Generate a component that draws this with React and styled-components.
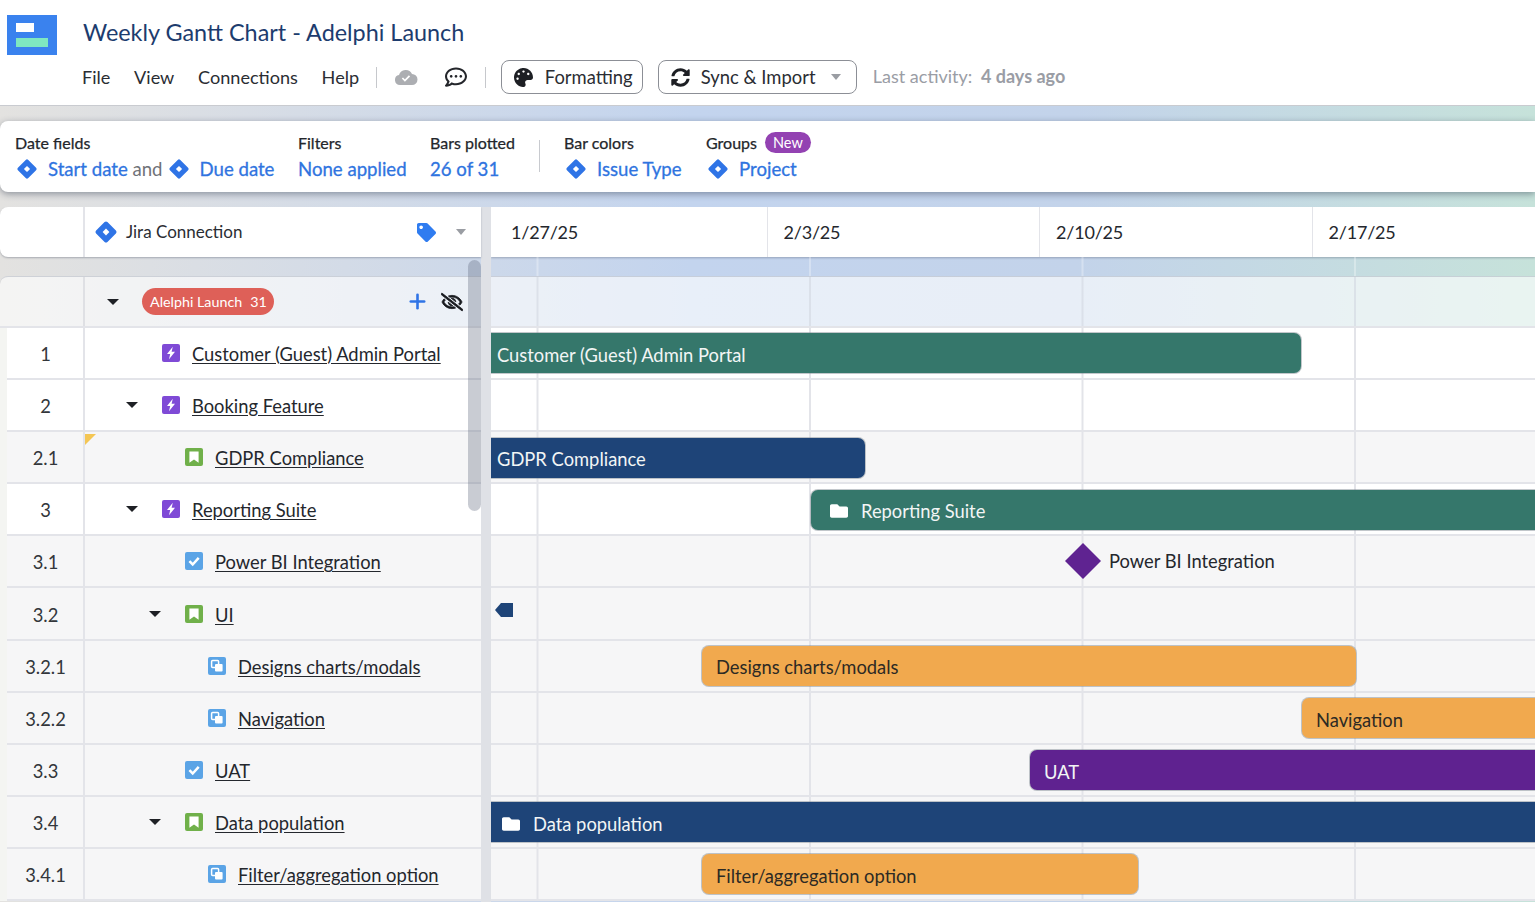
import React from 'react';
import styled, { createGlobalStyle } from 'styled-components';
import { FaPalette, FaSyncAlt, FaTag, FaRegCommentDots, FaRegEyeSlash, FaFolder } from 'react-icons/fa';
import { Plus } from 'lucide-react';

const GlobalStyle = createGlobalStyle`
  html, body {
    margin: 0;
    height: 100%;
    overflow: hidden;
    background: #fff;
    font-family: Lato, "Open Sans", sans-serif;
    color: #22252c;
  }
  * { box-sizing: border-box; }
`;

const JiraIcon = ({ size = 22 }) => (
  <svg width={size} height={size} viewBox="0 0 24 24">
    <rect x="4" y="4" width="16" height="16" rx="2" fill="#2f74e6" transform="rotate(45 12 12)" />
    <rect x="9.6" y="9.6" width="4.8" height="4.8" fill="#fff" transform="rotate(45 12 12)" />
  </svg>
);

const BoltIcon = () => (
  <svg width="18" height="18" viewBox="0 0 18 18">
    <rect width="18" height="18" rx="2" fill="#7f4ad6" />
    <path d="M10.8 2.8 5 10h3.2l-1.2 5.2L13 7.8H9.6z" fill="#fff" />
  </svg>
);

const StoryIcon = () => (
  <svg width="18" height="18" viewBox="0 0 18 18">
    <rect width="18" height="18" rx="2" fill="#70b04a" />
    <path d="M4.4 3.4h9.2v11.4L9 11.6l-4.6 3.2z" fill="#fff" />
  </svg>
);

const TaskIcon = () => (
  <svg width="18" height="18" viewBox="0 0 18 18">
    <rect width="18" height="18" rx="2" fill="#5ba4e6" />
    <path d="m4.4 9.2 3.3 3.3 6-6.6" fill="none" stroke="#fff" strokeWidth="2.5" />
  </svg>
);

const SubtaskIcon = () => (
  <svg width="18" height="18" viewBox="0 0 18 18">
    <rect width="18" height="18" rx="2" fill="#5ba4e6" />
    <rect x="3.6" y="3.4" width="7" height="7" rx="1" fill="none" stroke="#fff" strokeWidth="1.5" />
    <rect x="7" y="7" width="7.6" height="7.6" rx="1" fill="#fff" />
  </svg>
);

const CloudCheckIcon = () => (
  <svg width="24" height="16" viewBox="0 0 24 16">
    <path d="M6 16a5 5 0 0 1-1-9.9A7 7 0 0 1 18 5a5.5 5.5 0 0 1 0 11z" fill="#acaeb2" />
    <path d="m8.4 9 2.5 2.5 4.6-4.6" fill="none" stroke="#fff" strokeWidth="1.7" />
  </svg>
);

const MilestoneShape = () => (
  <svg width="36" height="36" viewBox="0 0 36 36">
    <polygon points="18,0 36,18 18,36 0,18" fill="#5f2391" />
  </svg>
);

const ICONS = { bolt: BoltIcon, story: StoryIcon, task: TaskIcon, subtask: SubtaskIcon };

const ROWS = [
  { num: '1', title: 'Customer (Guest) Admin Portal', level: 0, icon: 'bolt', white: true, bar: { left: 0, width: 810, color: '#35776b', flush: true, label: 'Customer (Guest) Admin Portal' } },
  { num: '2', title: 'Booking Feature', level: 0, icon: 'bolt', caret: true, white: true },
  { num: '2.1', title: 'GDPR Compliance', level: 1, icon: 'story', flag: true, bar: { left: 0, width: 374, color: '#1e4478', flush: true, label: 'GDPR Compliance' } },
  { num: '3', title: 'Reporting Suite', level: 0, icon: 'bolt', caret: true, white: true, bar: { left: 320, width: 800, color: '#35776b', folder: true, label: 'Reporting Suite' } },
  { num: '3.1', title: 'Power BI Integration', level: 1, icon: 'task', milestone: { left: 574, label: 'Power BI Integration' } },
  { num: '3.2', title: 'UI', level: 1, icon: 'story', caret: true, stub: true },
  { num: '3.2.1', title: 'Designs charts/modals', level: 2, icon: 'subtask', bar: { left: 211, width: 654, color: '#f1a94e', dark: true, label: 'Designs charts/modals' } },
  { num: '3.2.2', title: 'Navigation', level: 2, icon: 'subtask', bar: { left: 811, width: 400, color: '#f1a94e', dark: true, label: 'Navigation' } },
  { num: '3.3', title: 'UAT', level: 1, icon: 'task', bar: { left: 539, width: 700, color: '#5f2290', label: 'UAT' } },
  { num: '3.4', title: 'Data population', level: 1, icon: 'story', caret: true, bar: { left: 0, width: 1100, color: '#1e4478', flush: true, folder: true, label: 'Data population' } },
  { num: '3.4.1', title: 'Filter/aggregation option', level: 2, icon: 'subtask', bar: { left: 211, width: 436, color: '#f1a94e', dark: true, label: 'Filter/aggregation option' } },
];

const DATES = [
  { label: '1/27/25', width: 276.5, pad: 20 },
  { label: '2/3/25', width: 272.5, pad: 16 },
  { label: '2/10/25', width: 272.5, pad: 16 },
  { label: '2/17/25', width: 223, pad: 16 },
];

export default function App() {
  return (
    <>
      <GlobalStyle />
      <Page>
        <TopBar>
          <Logo>
            <svg width="50" height="40" viewBox="0 0 50 40">
              <rect width="50" height="40" fill="#3a82ee" />
              <rect x="9" y="8" width="18" height="9" fill="#fff" />
              <rect x="9" y="23" width="32" height="9" fill="#7fe8c0" />
            </svg>
          </Logo>
          <TopBarMain>
            <Title>Weekly Gantt Chart - Adelphi Launch</Title>
            <MenuRow>
              <MenuItem>File</MenuItem>
              <MenuItem>View</MenuItem>
              <MenuItem>Connections</MenuItem>
              <MenuItem>Help</MenuItem>
              <MenuDivider $left={-7} $right={17} />
              <CloudCheckIcon />
              <CommentButton><FaRegCommentDots size={22} /></CommentButton>
              <MenuDivider $left={18} $right={15} />
              <ToolButton $width={142}><FaPalette size={19} />Formatting</ToolButton>
              <ToolButton $width={199} $gap={11}><FaSyncAlt size={19} />Sync &amp; Import<GreyCaret $left={4} /></ToolButton>
              <Activity>Last activity: <strong>4 days ago</strong></Activity>
            </MenuRow>
          </TopBarMain>
        </TopBar>

        <Workspace>
          <FilterCard>
            <FilterGroup $width={283}>
              <FilterLabel>Date fields</FilterLabel>
              <FilterValue><JiraIcon />Start date <Muted>and</Muted> <JiraIcon />Due date</FilterValue>
            </FilterGroup>
            <FilterGroup $width={132}>
              <FilterLabel>Filters</FilterLabel>
              <FilterValue>None applied</FilterValue>
            </FilterGroup>
            <FilterGroup $width={109}>
              <FilterLabel>Bars plotted</FilterLabel>
              <FilterValue>26 of 31</FilterValue>
            </FilterGroup>
            <FilterDivider />
            <FilterGroup $width={142}>
              <FilterLabel>Bar colors</FilterLabel>
              <FilterValue><JiraIcon />Issue Type</FilterValue>
            </FilterGroup>
            <FilterGroup>
              <FilterLabel>Groups <NewBadge>New</NewBadge></FilterLabel>
              <FilterValue><JiraIcon />Project</FilterValue>
            </FilterGroup>
          </FilterCard>

          <Gantt>
            <TablePanel>
              <TableHead>
                <HeadNumber />
                <HeadTitle>
                  <JiraIcon size={24} />
                  <HeadLabel>Jira Connection</HeadLabel>
                  <HeadActions>
                    <TagIcon><FaTag size={19} /></TagIcon>
                    <GreyCaret $left={0} />
                  </HeadActions>
                </HeadTitle>
              </TableHead>
              <Band />
              <GroupRow>
                <GroupNumber />
                <GroupTitle>
                  <Caret />
                  <GroupPill>Alelphi Launch<span>31</span></GroupPill>
                  <GroupActions>
                    <Plus size={23} color="#2f74e6" strokeWidth={2.7} />
                    <FaRegEyeSlash size={22} color="#16181d" stroke="#16181d" strokeWidth={24} />
                  </GroupActions>
                </GroupTitle>
              </GroupRow>
              <TableRows>
                {ROWS.map((row) => {
                  const Icon = ICONS[row.icon];
                  return (
                    <TableRow key={row.num} $white={row.white}>
                      <RowNumber>{row.num}</RowNumber>
                      <RowTitle $level={row.level}>
                        {row.flag && <Flag />}
                        <CaretSlot>{row.caret && <Caret />}</CaretSlot>
                        <IconSlot><Icon /></IconSlot>
                        <IssueLink>{row.title}</IssueLink>
                      </RowTitle>
                    </TableRow>
                  );
                })}
              </TableRows>
              <Scrollbar />
            </TablePanel>

            <Splitter />

            <Timeline>
              <DateHead>
                {DATES.map((d) => (
                  <DateCell key={d.label} $width={d.width} $pad={d.pad}>{d.label}</DateCell>
                ))}
              </DateHead>
              <TimelineBand />
              <TimelineGroup />
              {ROWS.map((row) => (
                <TimelineRow key={row.num} $white={row.white}>
                  {row.bar && (
                    <Bar
                      $left={row.bar.left}
                      $width={row.bar.width}
                      $color={row.bar.color}
                      $flush={row.bar.flush}
                      $dark={row.bar.dark}
                      $folder={row.bar.folder}
                    >
                      {row.bar.folder && <FaFolder size={18} color="#fff" />}
                      {row.bar.label}
                    </Bar>
                  )}
                  {row.milestone && (
                    <Milestone $left={row.milestone.left}>
                      <MilestoneShape />
                      {row.milestone.label}
                    </Milestone>
                  )}
                  {row.stub && (
                    <Stub>
                      <svg width="18" height="14" viewBox="0 0 18 14">
                        <polygon points="0,7 6,0 18,0 18,14 6,14" fill="#1e4478" />
                      </svg>
                    </Stub>
                  )}
                </TimelineRow>
              ))}
            </Timeline>
          </Gantt>
        </Workspace>
      </Page>
    </>
  );
}

const ROW_HEIGHT = '52.1px';
const LINE = '#e3e4e9';
const TEXT_SIZE = '18.35px';

const Page = styled.div`
  width: 1535px;
  height: 902px;
  overflow: hidden;
  display: flex;
  flex-direction: column;
`;

const TopBar = styled.header`
  height: 106px;
  flex-shrink: 0;
  display: flex;
  background: #fff;
  border-bottom: 1px solid #c9cbd0;
  padding: 15px 0 0 7px;
`;

const Logo = styled.div`
  width: 50px;
  height: 40px;
  margin-right: 25px;
  svg { display: block; }
`;

const TopBarMain = styled.div`
  display: flex;
  flex-direction: column;
`;

const Title = styled.h1`
  margin: 1px 0 1px 1px;
  font-size: 23.4px;
  line-height: 33px;
  font-weight: 400;
  color: #1d3c6e;
`;

const MenuRow = styled.div`
  display: flex;
  align-items: center;
  height: 34px;
  margin-top: 10px;
`;

const MenuItem = styled.span`
  font-size: 18.1px;
  color: #2a2d33;
  margin-right: 23.7px;
`;

const MenuDivider = styled.span`
  width: 1px;
  height: 21px;
  background: #c6c8cc;
  margin: 0 ${(p) => p.$right}px 0 ${(p) => p.$left}px;
`;

const CommentButton = styled.span`
  display: flex;
  margin-left: 27px;
  color: #24262b;
`;

const ToolButton = styled.button`
  width: ${(p) => p.$width}px;
  height: 34px;
  display: flex;
  align-items: center;
  gap: ${(p) => p.$gap || 12}px;
  padding: 0 0 0 12px;
  margin-right: 15px;
  background: #fff;
  border: 1px solid #8c8f96;
  border-radius: 8px;
  font: 400 18.4px Lato, sans-serif;
  color: #2a2d33;
  svg { flex-shrink: 0; color: #1d1f24; }
`;

const GreyCaret = styled.span`
  width: 0;
  height: 0;
  margin-left: ${(p) => p.$left}px;
  border-left: 5.5px solid transparent;
  border-right: 5.5px solid transparent;
  border-top: 6px solid #9a9da3;
`;

const Activity = styled.span`
  margin-left: 1px;
  font-size: 18px;
  color: #9a9da5;
  padding-bottom: 3px;
  strong {
    font-weight: 700;
    margin-left: 4px;
  }
`;

const Workspace = styled.main`
  flex: 1;
  display: flex;
  flex-direction: column;
  padding-top: 15px;
  min-height: 0;
  background: linear-gradient(90deg, #e3e2e0 0%, #c3d4ee 45%, #c3d3ea 70%, #c6e2da 100%);
`;

const FilterCard = styled.section`
  height: 71px;
  flex-shrink: 0;
  display: flex;
  background: #fff;
  border-radius: 8px 0 0 8px;
  padding: 11px 0 0 15px;
  box-shadow: 0 2px 7px rgba(40, 50, 70, 0.45);
`;

const FilterGroup = styled.div`
  width: ${(p) => (p.$width ? `${p.$width}px` : 'auto')};
  display: flex;
  flex-direction: column;
`;

const FilterLabel = styled.div`
  display: flex;
  align-items: center;
  height: 22px;
  padding-bottom: 2px;
  font-size: 16px;
  -webkit-text-stroke: 0.25px currentColor;
  color: #23262b;
`;

const FilterValue = styled.div`
  display: flex;
  align-items: center;
  height: 27px;
  margin-top: 1px;
  font-size: 18.6px;
  -webkit-text-stroke: 0.3px currentColor;
  color: #2f74e0;
  white-space: pre;
  svg { margin: 0 10px 0 1px; flex-shrink: 0; }
`;

const Muted = styled.span`
  color: #6f7278;
  -webkit-text-stroke: 0;
  margin-right: 4px;
`;

const NewBadge = styled.span`
  margin-left: 8px;
  padding: 0 8px;
  height: 21px;
  line-height: 21px;
  border-radius: 11px;
  background: #9342b2;
  color: #fff;
  font-size: 14.5px;
  -webkit-text-stroke: 0;
`;

const FilterDivider = styled.span`
  width: 1px;
  height: 32px;
  margin: 8px 24px 0 0;
  background: #c8cacf;
`;

const Gantt = styled.div`
  flex: 1;
  display: flex;
  margin-top: 15px;
  min-height: 0;
  overflow: hidden;
`;

const TablePanel = styled.div`
  position: relative;
  width: 481px;
  flex-shrink: 0;
`;

const TableHead = styled.div`
  height: 50px;
  display: flex;
  background: #fff;
  border-radius: 8px 0 0 8px;
  box-shadow: 0 1px 2px rgba(60, 70, 90, 0.35);
`;

const HeadNumber = styled.div`
  width: 85px;
  border-right: 2px solid ${LINE};
`;

const HeadTitle = styled.div`
  flex: 1;
  display: flex;
  align-items: center;
  padding: 0 15px 0 9px;
  font-size: 17px;
  color: #2a2d33;
`;

const HeadLabel = styled.span`
  margin: 0 0 2px 8px;
`;

const HeadActions = styled.div`
  margin-left: auto;
  display: flex;
  align-items: center;
  gap: 20px;
`;

const TagIcon = styled.span`
  display: flex;
  color: #2f7cf0;
`;

const Band = styled.div`
  height: 19px;
`;

const GroupRow = styled.div`
  height: 52px;
  display: flex;
  background: rgba(255, 255, 255, 0.62);
  border-radius: 8px 0 0 0;
  border-top: 1px solid rgba(120, 130, 150, 0.3);
  border-bottom: 2px solid ${LINE};
`;

const GroupNumber = styled.div`
  width: 85px;
  border-right: 2px solid #dfe0e4;
`;

const GroupTitle = styled.div`
  flex: 1;
  display: flex;
  align-items: center;
  padding: 0 18px 0 22px;
`;

const GroupPill = styled.span`
  display: flex;
  gap: 8px;
  align-items: center;
  height: 27px;
  margin-left: 23px;
  padding: 0 7px 0 8px;
  border-radius: 14px;
  background: #de6058;
  color: #fff;
  font-size: 14.3px;
`;

const GroupActions = styled.div`
  margin-left: auto;
  display: flex;
  align-items: center;
  gap: 12px;
`;

const TableRows = styled.div`
  padding-left: 7px;
  background: #f4f5f2;
`;

const TableRow = styled.div`
  height: ${ROW_HEIGHT};
  display: flex;
  background: ${(p) => (p.$white ? '#fff' : '#f6f6f7')};
  border-bottom: 2px solid ${LINE};
`;

const RowNumber = styled.div`
  width: 78px;
  display: flex;
  align-items: center;
  justify-content: center;
  padding: 2px 0 0 1px;
  border-right: 2px solid ${LINE};
  font-size: ${TEXT_SIZE};
  color: #33363b;
`;

const RowTitle = styled.div`
  position: relative;
  flex: 1;
  display: flex;
  align-items: center;
  padding-left: ${(p) => 40 + p.$level * 23}px;
`;

const Flag = styled.span`
  position: absolute;
  left: 0;
  top: 2px;
  width: 0;
  height: 0;
  border-top: 11px solid #f4c654;
  border-right: 11px solid transparent;
`;

const CaretSlot = styled.span`
  width: 37px;
  display: flex;
  padding-left: 1px;
`;

const Caret = styled.span`
  width: 0;
  height: 0;
  border-left: 6px solid transparent;
  border-right: 6px solid transparent;
  border-top: 6.5px solid #1e2025;
`;

const IconSlot = styled.span`
  display: flex;
  margin-right: 12px;
`;

const IssueLink = styled.a`
  margin-top: 2px;
  font-size: ${TEXT_SIZE};
  color: #24272d;
  text-decoration: underline;
  text-underline-offset: 2px;
  white-space: nowrap;
`;

const Scrollbar = styled.div`
  position: absolute;
  right: 0;
  top: 53px;
  width: 13px;
  height: 251px;
  border-radius: 7px;
  background: rgba(90, 100, 120, 0.33);
`;

const Splitter = styled.div`
  width: 10px;
  flex-shrink: 0;
  background: #dfe1e6;
`;

const Timeline = styled.div`
  flex: 1;
  min-width: 0;
  overflow: hidden;
`;

const DateHead = styled.div`
  height: 50px;
  display: flex;
  background: #fff;
  box-shadow: 0 1px 2px rgba(60, 70, 90, 0.35);
`;

const DateCell = styled.div`
  width: ${(p) => p.$width}px;
  flex-shrink: 0;
  display: flex;
  align-items: center;
  padding-left: ${(p) => p.$pad}px;
  font-size: 18px;
  letter-spacing: -0.2px;
  color: #24272d;
  border-right: 1.5px solid ${LINE};
  &:last-child { border-right: 0; }
`;

const gridLines = (color) => `linear-gradient(90deg, ${color} 1.5px, transparent 1.5px) 45.5px 0 / 272.5px 100% repeat-x`;

const TimelineBand = styled.div`
  height: 19px;
  background: ${gridLines('rgba(255, 255, 255, 0.3)')};
`;

const TimelineGroup = styled.div`
  height: 52px;
  background: ${gridLines('rgba(210, 215, 225, 0.6)')}, rgba(255, 255, 255, 0.62);
  border-top: 1px solid rgba(120, 130, 150, 0.3);
  border-bottom: 2px solid ${LINE};
`;

const TimelineRow = styled.div`
  height: ${ROW_HEIGHT};
  display: flex;
  align-items: flex-start;
  background: ${gridLines(LINE)}, ${(p) => (p.$white ? '#fff' : '#f6f6f7')};
  border-bottom: 2px solid ${LINE};
`;

const Bar = styled.div`
  flex-shrink: 0;
  width: ${(p) => p.$width}px;
  height: 40px;
  margin: 5.4px 0 0 ${(p) => p.$left}px;
  display: flex;
  align-items: center;
  gap: 13px;
  padding-left: ${(p) => (p.$dark ? 14 : p.$folder ? (p.$flush ? 11 : 19) : p.$flush ? 6 : 14)}px;
  padding-top: 3px;
  background: ${(p) => p.$color};
  border-radius: ${(p) => (p.$flush ? '0 7px 7px 0' : '7px')};
  box-shadow: 0 0 0 1px rgba(120, 130, 140, 0.45);
  font-size: ${TEXT_SIZE};
  color: ${(p) => (p.$dark ? '#2d2a24' : '#f2f5f5')};
  white-space: nowrap;
`;

const Milestone = styled.div`
  display: flex;
  align-items: center;
  gap: 8px;
  height: 100%;
  margin-left: ${(p) => p.$left}px;
  font-size: ${TEXT_SIZE};
  color: #24272d;
  svg { flex-shrink: 0; }
`;

const Stub = styled.div`
  display: flex;
  margin: 15px 0 0 4px;
`;
